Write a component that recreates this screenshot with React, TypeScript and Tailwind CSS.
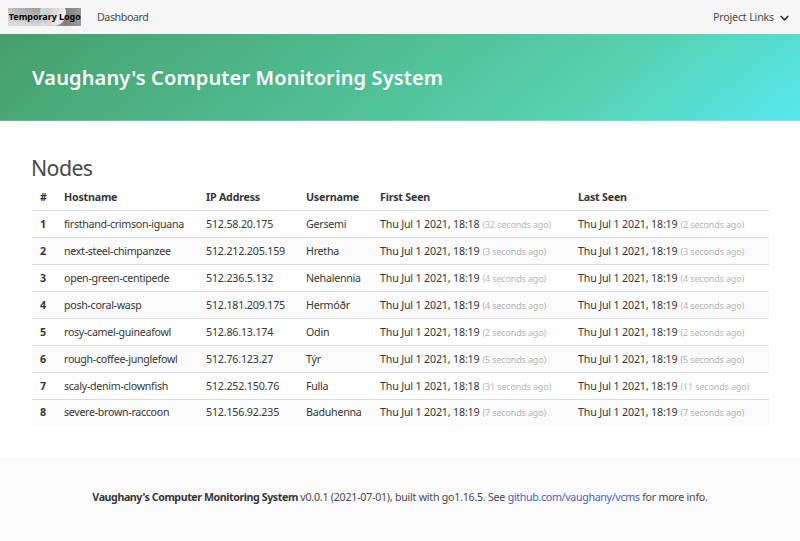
import React from "react";

type Node = {
  host: string;
  ip: string;
  user: string;
  first: string;
  firstAgo: string;
  last: string;
  lastAgo: string;
};

const D = "Thu Jul 1 2021, 18:";

const nodes: Node[] = [
  { host: "firsthand-crimson-iguana", ip: "512.58.20.175", user: "Gersemi", first: D + "18", firstAgo: "(32 seconds ago)", last: D + "19", lastAgo: "(2 seconds ago)" },
  { host: "next-steel-chimpanzee", ip: "512.212.205.159", user: "Hretha", first: D + "19", firstAgo: "(3 seconds ago)", last: D + "19", lastAgo: "(3 seconds ago)" },
  { host: "open-green-centipede", ip: "512.236.5.132", user: "Nehalennia", first: D + "19", firstAgo: "(4 seconds ago)", last: D + "19", lastAgo: "(4 seconds ago)" },
  { host: "posh-coral-wasp", ip: "512.181.209.175", user: "Hermóðr", first: D + "19", firstAgo: "(4 seconds ago)", last: D + "19", lastAgo: "(4 seconds ago)" },
  { host: "rosy-camel-guineafowl", ip: "512.86.13.174", user: "Odin", first: D + "19", firstAgo: "(2 seconds ago)", last: D + "19", lastAgo: "(2 seconds ago)" },
  { host: "rough-coffee-junglefowl", ip: "512.76.123.27", user: "Týr", first: D + "19", firstAgo: "(5 seconds ago)", last: D + "19", lastAgo: "(5 seconds ago)" },
  { host: "scaly-denim-clownfish", ip: "512.252.150.76", user: "Fulla", first: D + "18", firstAgo: "(31 seconds ago)", last: D + "19", lastAgo: "(11 seconds ago)" },
  { host: "severe-brown-raccoon", ip: "512.156.92.235", user: "Baduhenna", first: D + "19", firstAgo: "(7 seconds ago)", last: D + "19", lastAgo: "(7 seconds ago)" },
];

function Logo() {
  return (
    <svg width="73" height="18" viewBox="0 0 73 18" className="block overflow-visible">
      <defs>
        <linearGradient id="lg" x1="0" x2="1" y1="0" y2="0">
          <stop offset="0" stopColor="#bcbcbc" />
          <stop offset="0.42" stopColor="#8c8c8c" />
          <stop offset="0.5" stopColor="#a8a8a8" />
          <stop offset="0.8" stopColor="#808080" />
          <stop offset="1" stopColor="#9c9c9c" />
        </linearGradient>
        <linearGradient id="disc" x1="0" x2="1" y1="0" y2="0.4">
          <stop offset="0" stopColor="#d8d8d8" />
          <stop offset="0.45" stopColor="#cdcdcd" />
          <stop offset="1" stopColor="#f0f0f0" />
        </linearGradient>
        <linearGradient id="shade" x1="0" x2="0.3" y1="0" y2="1">
          <stop offset="0" stopColor="#ffffff" stopOpacity="0" />
          <stop offset="1" stopColor="#ffffff" stopOpacity="0.6" />
        </linearGradient>
        <clipPath id="frame">
          <rect width="73" height="18" />
        </clipPath>
      </defs>
      <rect width="73" height="18" fill="url(#lg)" />
      <rect width="42" height="18" fill="url(#shade)" />
      <circle cx="45" cy="5" r="13" fill="url(#disc)" clipPath="url(#frame)" />
      <text x="0.8" y="12" textLength="72" lengthAdjust="spacingAndGlyphs" fontFamily="Noto Sans, Open Sans, sans-serif" fontWeight="700" fontSize="9.6" fill="#000">Temporary Logo</text>
    </svg>
  );
}

function Seen({ at, ago }: { at: string; ago: string }) {
  return (
    <td className="whitespace-nowrap px-2">
      <div className="flex h-4 items-baseline">
        <span className="w-[102.5px] tracking-[-0.17px]">{at}</span>
        <span className="text-[9px] leading-none tracking-[-0.15px] text-[#b5b5b5]">{ago}</span>
      </div>
    </td>
  );
}

export default function App() {
  return (
    <div className="flex h-[541px] w-[800px] flex-col overflow-hidden bg-white font-['Noto_Sans','Open_Sans',sans-serif] text-[10.67px] leading-4 text-[#363636]">
      <nav className="flex h-[34px] shrink-0 items-center bg-[#f5f5f5] pl-2 pr-[11px] text-[#4a4a4a]">
        <Logo />
        <span className="ml-4 tracking-[-0.42px]">Dashboard</span>
        <span className="ml-auto tracking-[-0.17px]">Project Links</span>
        <svg width="9" height="7" viewBox="0 0 9 7" className="ml-1.5 mt-0.5" fill="none" stroke="#363636" strokeWidth="1.7" strokeLinecap="round" strokeLinejoin="round">
          <path d="M1.2 1.5l3.3 3.3 3.3-3.3" />
        </svg>
      </nav>

      <header className="flex h-[87px] shrink-0 items-center border-b border-white/20 bg-[linear-gradient(141deg,#469f6a_0%,#56d0ad_71%,#57e8ee_100%)] bg-origin-border px-8 pt-0.5">
        <h1 className="whitespace-nowrap text-[20px] font-semibold leading-6 tracking-[0.13px] text-white">
          Vaughany's Computer Monitoring System
        </h1>
      </header>

      <main className="h-[337px] shrink-0 pl-8 pr-[31px] pt-[35px]">
        <h2 className="-ml-px h-[27px] text-[21.33px] leading-6 tracking-[-0.6px] text-[#4a4a4a]">Nodes</h2>
        <table className="w-[737px] table-fixed border-collapse text-left">
          <colgroup>
            <col className="w-[24px]" />
            <col className="w-[142px]" />
            <col className="w-[100px]" />
            <col className="w-[74px]" />
            <col className="w-[198px]" />
            <col className="w-[199px]" />
          </colgroup>
          <thead>
            <tr className="h-[27px] border-b border-[#dbdbdb] tracking-[-0.2px]">
              <th className="px-2 pt-0.5">#</th>
              <th className="px-2 pt-0.5">Hostname</th>
              <th className="px-2 pt-0.5">IP Address</th>
              <th className="px-2 pt-0.5">Username</th>
              <th className="px-2 pt-0.5">First Seen</th>
              <th className="px-2 pt-0.5">Last Seen</th>
            </tr>
          </thead>
          <tbody>
            {nodes.map((n, i) => (
              <tr key={n.host} className="h-[27px] border-b border-[#dbdbdb] even:bg-[#fafafa] last:h-[26px] last:border-0">
                <th className="px-2">{i + 1}</th>
                <td className="whitespace-nowrap px-2 tracking-[-0.3px]">{n.host}</td>
                <td className="whitespace-nowrap px-2 tracking-[-0.18px]">{n.ip}</td>
                <td className="whitespace-nowrap px-2 tracking-[-0.25px]">{n.user}</td>
                <Seen at={n.first} ago={n.firstAgo} />
                <Seen at={n.last} ago={n.lastAgo} />
              </tr>
            ))}
          </tbody>
        </table>
      </main>

      <footer className="flex-1 bg-[#fafafa] pt-[31px] text-center text-[#4a4a4a]">
        <p className="whitespace-nowrap tracking-[-0.25px]">
          <strong className="font-bold tracking-[-0.43px] text-[#363636]">Vaughany's Computer Monitoring System</strong> v0.0.1 (2021-07-01), built with go1.16.5. See{" "}
          <a className="tracking-[-0.33px] text-[#485fc7]">github.com/vaughany/vcms</a> for more info.
        </p>
      </footer>
    </div>
  );
}
